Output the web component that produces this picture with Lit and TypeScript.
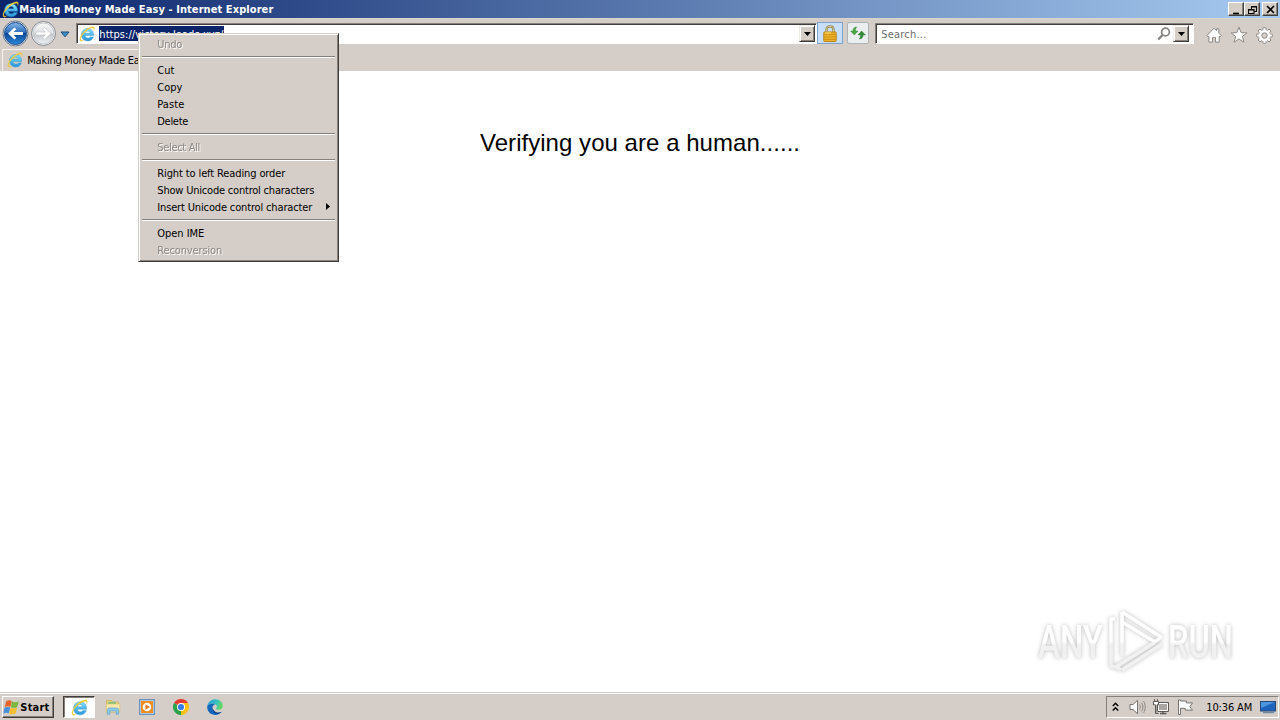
import { LitElement, html, svg, css, nothing } from "lit";
import { customElement } from "lit/decorators.js";

/* A single line of interface text, spaced out to a given width. */
const label = (text: string, w: number, cls = "", y = 11) => html`
  <svg class="label ${cls}" width=${w + 1} height="16" viewBox="0 0 ${w + 1} 16">
    <text x="0.3" y=${y} textLength=${w}>${text}</text>
  </svg>`;

const ie = (s: number, id: string) => html`
  <svg class="icon" width=${s} height=${s} viewBox="0 0 16 16">
    <defs><linearGradient id=${id} x1="0" y1="0" x2="0" y2="1"><stop offset="0" stop-color="#8bdcfa"/><stop offset=".5" stop-color="#4dbcf0"/><stop offset="1" stop-color="#2a93da"/></linearGradient></defs>
    <path d="M14.600 9.600H6c.1 1.500 1.200 2.500 2.800 2.500 1.100 0 1.900-.4 2.400-1.200h3.200c-.8 2.500-2.900 4-5.700 4-3.700 0-6.200-2.400-6.200-6.100S5 2.500 8.600 2.500s6.300 2.700 6 7.100zM6.100 7.300h5c-.1-1.300-1.100-2.200-2.500-2.200S6.300 6 6.100 7.300z" fill="url(#${id})" stroke="#2f8fcb" stroke-width=".4"/>
    <path d="M2 15.300C-.3 14.300 1 9.800 4.500 6 8.200 2 13.200-.2 14.900 1.200c.8.7.6 2-.1 3.300.1-1.200 0-1.900-.5-2.200C12.700 1.300 8.600 3.500 5.300 6.900c-3.100 3.300-4.300 6.300-3.200 7.200.6.400 1.600.2 2.700-.4-1.200 1.100-2 1.900-2.800 1.600z" fill="#f6d236" stroke="#d9b02a" stroke-width=".2"/>
  </svg>`;

const icons = {
  back: html`<svg class="icon" width="27" height="27" viewBox="0 0 27 27">
    <defs><linearGradient id="bk" x1="0" y1="0" x2="0" y2="1"><stop offset="0" stop-color="#85b5e6"/><stop offset=".45" stop-color="#2d6fbd"/><stop offset=".5" stop-color="#0f4596"/><stop offset="1" stop-color="#2c8bdd"/></linearGradient></defs>
    <circle cx="13.500" cy="13.500" r="12.500" fill="#dce6ef" stroke="#6c7987"/><circle cx="13.500" cy="13.500" r="11" fill="url(#bk)" stroke="#1c4d91"/>
    <path d="M6 13.500l6.500-6 1.800 1.800-2.700 2.700h9.400v3h-9.400l2.700 2.700-1.800 1.800z" fill="#fff"/></svg>`,
  forward: html`<svg class="icon" width="27" height="27" viewBox="0 0 27 27">
    <defs><linearGradient id="fw" x1="0" y1="0" x2="0" y2="1"><stop offset="0" stop-color="#fafafa"/><stop offset=".48" stop-color="#dfe0e2"/><stop offset=".52" stop-color="#c4c8cd"/><stop offset="1" stop-color="#eef1f4"/></linearGradient></defs>
    <circle cx="13.500" cy="13.500" r="12" fill="#f2f3f4" stroke="#858b92"/><circle cx="13.500" cy="13.500" r="10.500" fill="url(#fw)" stroke="#c4c8cc"/>
    <path d="M21 13.500l-6.500-6-1.800 1.800 2.700 2.700H6v3h9.400l-2.700 2.700 1.800 1.800z" fill="#fff" stroke="#b4b8bc" stroke-width=".5"/></svg>`,
  recent: html`<svg class="icon" width="10" height="7" viewBox="0 0 10 7"><path d="M1 1h8L5 5.800z" fill="#3c8fc9" stroke="#1b4b78"/></svg>`,
  down: html`<svg class="icon" width="7" height="4" viewBox="0 0 7 4"><path d="M0 0h7L3.500 4z" fill="#000"/></svg>`,
  lock: html`<svg class="icon" width="14" height="17" viewBox="0 0 14 17">
    <path d="M3.500 8V4.500C3.500 2.300 5 1.300 7 1.300s3.500 1 3.500 3.200V8" fill="none" stroke="#8d7a45" stroke-width="2.200"/><path d="M3.500 8V4.500C3.500 2.300 5 1.300 7 1.300s3.500 1 3.500 3.200V8" fill="none" stroke="#e5d9a4" stroke-width=".9"/>
    <rect x=".8" y="7" width="12.400" height="9.500" rx=".8" fill="#efb128" stroke="#b88216"/><path d="M1.500 9.500h11M1.500 12h11M1.500 14.500h11" stroke="#c78a12" stroke-width=".8"/><path d="M2 8h6" stroke="#ffe170"/></svg>`,
  refresh: html`<svg class="icon" width="16" height="14" viewBox="0 0 16 14">
    <path d="M6.800 1C4.300 1 3 2.300 3 5H.6l3.800 4L8 5H5.400C5.400 3 5.800 2 6.800 1z" fill="#48a83f" stroke="#267a2e" stroke-width=".4"/>
    <path d="M9.200 13c2.500 0 3.800-1.300 3.800-4h2.400l-3.800-4L8 9h2.600c0 2-.4 3-1.400 4z" fill="#328c35" stroke="#1e6827" stroke-width=".4"/></svg>`,
  search: html`<svg class="icon" width="14" height="14" viewBox="0 0 14 14"><circle cx="8.500" cy="5" r="3.900" fill="#fff" stroke="#85817e" stroke-width="1.700"/><path d="M5.500 8L1.300 12.500" stroke="#85817e" stroke-width="2.400"/></svg>`,
  home: html`<svg class="icon" width="16" height="16" viewBox="0 0 16 16"><path d="M.8 8.700L8 1.200l2.500 2.500V1.800h2.300v4.300l2.500 2.600-1.300 1.200-.8-.8v6h-3.700v-4.700h-3v4.700H2.900v-6l-.8.800z" fill="#fff" stroke="#8d8985" stroke-width="1"/></svg>`,
  star: html`<svg class="icon" width="18" height="18" viewBox="0 0 18 18"><path d="M9 1.200l2.100 5.400 5.800.3-4.500 3.600 1.500 5.700L9 13l-4.900 3.200 1.500-5.700L1.100 6.900l5.800-.3z" fill="#fff" stroke="#8d8985"/></svg>`,
  gear: html`<svg class="icon" width="17" height="17" viewBox="-8.500 -8.500 17 17">
    <g fill="#fff" stroke="#8d8985" stroke-width=".9">${[0, 45, 90, 135, 180, 225, 270, 315].map(a => svg`<path transform="rotate(${a})" d="M-1.700-5L-1.400-7.800H1.400L1.700-5"/>`)}</g>
    <circle r="4.300" fill="none" stroke="#fff" stroke-width="2.600"/><circle r="2.700" fill="#d4cec8" stroke="#8d8985" stroke-width=".9"/></svg>`,
  flag: html`<svg class="icon" width="17" height="17" viewBox="0 0 16 16">
    <path d="M3 2.200C5 .8 6.700 1.200 8.300 2L6.900 7.500C5 6.600 3.500 6.600 1.600 7.500z" fill="#e7652b"/><path d="M8.700 2.300c2 1 3.900 1 6.200-.2l-1.500 5.500c-2.100 1.100-4.100 1.100-6.100.2z" fill="#7cb83c"/>
    <path d="M1.500 8.100c1.800-.9 3.500-.9 5.300 0l-1.400 5.400c-1.700-.8-3.400-.8-5.200.2z" fill="#4b8fd8"/><path d="M7.200 8.300c2 .9 4 .9 6.100-.1l-1.500 5.500c-2 1-4 1-6 .1z" fill="#f5bd30"/></svg>`,
  folder: html`<svg class="icon" width="16" height="16" viewBox="0 0 16 16">
    <path d="M1.500 1.500h5l1 1.500h6v10h-12z" fill="#ecd27a" stroke="#c8a849" stroke-width=".6"/><path d="M3 2.800h8v3H3z" fill="#8cc47c"/><path d="M1.200 5h13.600v8H1.200z" fill="#f7e7a8" stroke="#d6bb66" stroke-width=".5"/>
    <path d="M2.300 15.300V11c0-1.300.8-2 2-2h7.400c1.200 0 2 .7 2 2v4.300h-2.500V12H4.800v3.300z" fill="#8ac8ec" stroke="#5a9fce" stroke-width=".6"/></svg>`,
  media: html`<svg class="icon" width="16" height="16" viewBox="0 0 16 16"><rect x=".6" y=".6" width="14.800" height="14.800" fill="#b5d2ec" stroke="#5d8bb6"/><rect x="2" y="2" width="12" height="12" fill="#f28c1e"/><circle cx="8" cy="8" r="4.300" fill="#fff"/><path d="M6.500 5.200L10.800 8l-4.300 2.800z" fill="#e87817"/></svg>`,
  chrome: html`<svg class="icon" width="16" height="16" viewBox="0 0 16 16"><path d="M8 8L1.070 4A8 8 0 0 1 14.930 4z" fill="#e33b2e"/><path d="M8 8l6.930-4A8 8 0 0 1 8 16z" fill="#fbc116"/><path d="M8 8v8A8 8 0 0 1 1.070 4z" fill="#2da14c"/><path d="M8 4h6.930L11.500 10z" fill="#fbc116"/><path d="M8 16l3.500-6L8 8z" fill="#fbc116"/><circle cx="8" cy="8" r="4" fill="#fff"/><circle cx="8" cy="8" r="3.100" fill="#3b7ded"/></svg>`,
  edge: html`<svg class="icon" width="16" height="16" viewBox="0 0 16 16">
    <defs><linearGradient id="eg" x1="0" y1="0" x2="1" y2=".3"><stop offset="0" stop-color="#269ed9"/><stop offset=".6" stop-color="#35bfc4"/><stop offset="1" stop-color="#64d866"/></linearGradient></defs>
    <path d="M.2 7.700C.5 3.500 4 .2 8.200.2c4.500 0 7.600 3.200 7.600 6.500 0 2.600-2 4.100-4.200 4.100-1.600 0-2.500-.5-2.500-1.100 0-.5.800-.8.800-2.100C9.900 5.700 8 4.600 5.500 4.600 2.800 4.600.8 6 .2 7.700z" fill="url(#eg)"/>
    <path d="M.2 7.700C.8 5.900 2.800 4.600 5.500 4.600c1.300 0 2.300.3 3.100.8C6.500 5.300 5.300 7.200 5.300 9c0 3 2.700 5 5.500 4.900 1.500 0 2.600-.4 3.800-1.100-1.400 1.900-3.700 3.100-6.400 3.100C3.700 15.900-.1 12.300.2 7.700z" fill="#1469bd"/><path d="M5.600 8C4.400 12 7.500 15.500 12 14.800c1-.4 1.900-1.100 2.600-2-4 2-8.800-.3-9-4.800z" fill="#10458f"/></svg>`,
  chevrons: html`<svg class="icon" width="7" height="10" viewBox="0 0 7 10"><path d="M.8 4L3.500 1.300 6.200 4M.8 8.500l2.700-2.700 2.700 2.700" fill="none" stroke="#000" stroke-width="1.500"/></svg>`,
  volume: html`<svg class="icon" width="17" height="16" viewBox="0 0 17 16"><path d="M1 5.500h3L8.500 1.300v13.400L4 10.500H1z" fill="#fff" stroke="#777370"/><path d="M10.500 5.500c1 1.600 1 3.400 0 5M12.500 3.700c2 2.800 2 5.800 0 8.600M14.500 2c2.300 3.800 2.300 8.200 0 12" fill="none" stroke="#8b8783"/></svg>`,
  network: html`<svg class="icon" width="16" height="16" viewBox="0 0 16 16"><path d="M4.500 3.500h11v9h-11z" fill="#aaa7a4" stroke="#5c5957"/><path d="M5.500 4.500h9v7h-9z" fill="none" stroke="#fff"/><path d="M7 14.500h6.500M10 12.500v2" stroke="#5c5957" stroke-width="1.500"/><path d="M.5 2.500h5v3.300H4v8.700h1.500M.5 2.500v3.300h2v8.700H4M1.500 0v2.500M4.500 0v2.500" fill="#fff" stroke="#5c5957"/></svg>`,
  action: html`<svg class="icon" width="17" height="16" viewBox="0 0 17 16"><path d="M1.500 1v14.500h2V9.300h4.800v1.800h7.200l-2.700-3.500 2.700-3.700H9.300V2H3.500V1z" fill="#fff" stroke="#777370"/></svg>`,
  desktop: html`<svg class="icon" width="16" height="14" viewBox="0 0 16 14"><rect x=".5" y="1.500" width="15" height="9.500" fill="#1e64bd" stroke="#254876"/><path d="M1 2h14L1 8z" fill="#4c96df"/><path d="M3 12.500h11" stroke="#70889f" stroke-width="1.500"/></svg>`,
};

type Item = { t: string; w: number; off?: boolean; sub?: boolean } | null;
const MENU: Item[] = [
  { t: "Undo", w: 25, off: true }, null,
  { t: "Cut", w: 17 }, { t: "Copy", w: 25 }, { t: "Paste", w: 27 }, { t: "Delete", w: 31 }, null,
  { t: "Select All", w: 43, off: true }, null,
  { t: "Right to left Reading order", w: 128 }, { t: "Show Unicode control characters", w: 157 }, { t: "Insert Unicode control character", w: 155, sub: true }, null,
  { t: "Open IME", w: 47 }, { t: "Reconversion", w: 65, off: true },
];

@customElement("app-root")
export class AppRoot extends LitElement {
  static styles = css`
    :host { display: flex; flex-direction: column; width: 1280px; height: 720px; position: relative; overflow: hidden; background: #fff; color: #000; }
    * { box-sizing: border-box; }
    svg { display: block; flex: none; }
    .label { overflow: visible; font: 11px "DejaVu Sans Condensed", "DejaVu Sans", sans-serif; font-stretch: condensed; fill: currentColor; }
    .bold { font-weight: bold; }
    .title { flex: none; height: 18px; display: flex; align-items: center; padding: 0 2px 0 2px; color: #fff; background: linear-gradient(90deg, #0a246a, #a6caf0); }
    .grow { flex: 1; }
    .win { width: 16px; height: 14px; background: #d5cec7; border: 1px solid; border-color: #fff #404040 #404040 #fff; box-shadow: inset -1px -1px #85807b; display: grid; place-items: center; }
    .close { margin-left: 2px; }
    .chrome { flex: none; height: 53px; background: #d5cec8; border-top: 1px solid #d9d6ca; display: flex; flex-direction: column; }
    .nav { height: 30px; padding: 3px 0 0 2px; display: flex; align-items: flex-start; }
    .travel { display: flex; gap: 1px; margin-top: -2px; width: 58px; }
    .recent { padding: 9px 0 0; width: 16px; }
    .field { height: 21px; border: 1px solid; border-color: #85807b #fff #fff #85807b; box-shadow: inset 1px 1px #403d3b; background: #fff; display: flex; align-items: center; padding: 1px; margin-top: 1px; }
    .address { width: 741px; padding-left: 2px; padding-right: 1px; }
    .url { background: #0a246a; color: #fff; width: 125px; height: 15px; margin-left: 4px; }
    .drop { width: 16px; height: 17px; background: #d5cec7; border: 1px solid; border-color: #efece8 #403d3b #403d3b #efece8; box-shadow: inset 1px 1px #fff, inset -1px -1px #85807b; display: grid; place-items: center; }
    .lock { width: 26px; height: 22px; border: 1px solid #7da2ce; background: #c9dff8; display: grid; place-items: center; }
    .reload { width: 22px; height: 22px; margin-left: 4px; border: 1px solid #aeb3b7; border-radius: 2px; background: #ebeeee; display: grid; place-items: center; }
    .search { width: 319px; margin-left: 6px; color: #6d6d6d; padding-left: 5px; padding-right: 4px; }
    .mag { margin-right: 2px; }
    .tools { display: flex; align-items: center; gap: 8px; margin-left: 12px; height: 18px; margin-top: 4px; }
    .tabs { height: 22px; padding-left: 2px; display: flex; }
    .tab { width: 240px; height: 22px; border: 1px solid #f5f2ef; border-bottom: 0; border-right-color: #85807b; display: flex; align-items: center; gap: 4px; padding: 0 0 1px 4px; }
    .page { flex: 1; min-height: 0; display: flex; flex-direction: column; align-items: center; padding-top: 58px; }
    .verify { margin: 0; }
    .wide { font: 24px "Liberation Sans", Arial, sans-serif; overflow: visible; }
    .mark { position: absolute; left: 1030px; top: 602px; overflow: visible; filter: drop-shadow(0 0 2px #bbb); }
    .mark text { font: 47px "Roboto", sans-serif; font-weight: 500; }
    .menu { position: absolute; left: 138px; top: 33px; width: 201px; height: 229px; background: #d5cec8; border: 1px solid; border-color: #d5cec7 #403d3b #403d3b #d5cec7; box-shadow: inset 1px 1px #fff, inset -1px -1px #85807b; padding: 2px; }
    .item { height: 17px; display: flex; align-items: center; padding: 0 6px 0 16px; justify-content: space-between; }
    .arrow { margin-bottom: 2px; }
    .off { color: #8b8681; filter: drop-shadow(1px 1px 0 #fff); }
    .sep { height: 2px; margin: 3px 1px 4px; border-top: 1px solid #85807b; border-bottom: 1px solid #fff; }
    .taskbar { flex: none; height: 28px; background: #d5cec8; border-top: 1px solid #d5cec8; box-shadow: inset 0 1px #fff; padding: 3px 1px 2px 2px; display: flex; align-items: flex-start; }
    .start { width: 52px; height: 22px; border: 1px solid; border-color: #fff #403d3b #403d3b #fff; box-shadow: inset -1px -1px #85807b; display: flex; align-items: center; padding-left: 0; }
    .active { width: 32px; height: 22px; margin-left: 9px; background: #fff; border: 1px solid; border-color: #403d3b #fff #fff #403d3b; box-shadow: inset 1px 1px #85807b; display: grid; place-items: center; }
    .pins { height: 22px; display: flex; align-items: center; gap: 18px; margin-left: 10px; }
    .tray { width: 173px; height: 22px; border: 1px solid; border-color: #85807b #fff #fff #85807b; display: flex; align-items: center; padding-left: 5px; }
    .i1 { margin-left: 10px; }
    .i2 { margin-left: 7px; }
    .i3 { margin-left: 8px; }
    .clock { margin-left: 12px; }
  `;

  render() {
    return html`
      <div class="title">${ie(17, "ie1")}${label("Making Money Made Easy - Internet Explorer", 254, "bold", 12)}<span class="grow"></span>
        ${["M2 9.500h6", "M4.500 5V2.500h5v5H7.500M4.500 3h5M1.500 5.500h5.500v4H1.500zM1.500 6h5.500", "M2 2l7 7M9 2l-7 7"].map((d, i) => html`<div class="win ${i === 2 ? "close" : ""}"><svg width="11" height="11" viewBox="0 0 11 11"><path d=${d} fill="none" stroke="#000" stroke-width=${i === 1 ? 1.1 : 1.7}/></svg></div>`)}
      </div>
      <div class="chrome">
        <div class="nav">
          <div class="travel">${icons.back}${icons.forward}</div><div class="recent">${icons.recent}</div>
          <div class="field address">${ie(16, "ie2")}<div class="url">${label("https://victory-leads.xyz/", 124, "", 12)}</div><span class="grow"></span><div class="drop">${icons.down}</div></div>
          <div class="lock">${icons.lock}</div><div class="reload">${icons.refresh}</div>
          <div class="field search">${label("Search...", 45, "", 12)}<span class="grow"></span><div class="mag">${icons.search}</div><div class="drop">${icons.down}</div></div>
          <div class="tools">${icons.home}${icons.star}${icons.gear}</div>
        </div>
        <div class="tabs"><div class="tab">${ie(16, "ie3")}${label("Making Money Made Easy", 123, "", 12)}</div></div>
      </div>
      <div class="page"><h1 class="verify"><svg class="wide" width="320" height="28" viewBox="0 0 320 28"><text x="0" y="22" textLength="320">Verifying you are a human......</text></svg></h1></div>
      <svg class="mark" width="210" height="80" viewBox="0 0 210 80">
        <defs><linearGradient id="mk" x1="0" y1="0" x2="0" y2="1"><stop offset=".5" stop-color="#fff"/><stop offset=".56" stop-color="#f1f1f1"/></linearGradient></defs>
        <text x="8" y="56" textLength="65" lengthAdjust="spacingAndGlyphs" fill="url(#mk)">ANY</text>
        <text x="138" y="56" textLength="65" lengthAdjust="spacingAndGlyphs" fill="url(#mk)">RUN</text>
        <g fill="none" stroke="url(#mk)" stroke-width="3.500" stroke-linejoin="round"><path d="M92 10v44M92 10l39 25-6 5-33-20M85 17h-4v47l5 1 6-4 32-20M92 68l40-26M91 68l-5-3"/></g>
      </svg>
      <div class="menu">${MENU.map(m => m ? html`<div class="item"><span class=${m.off ? "off" : ""}>${label(m.t, m.w)}</span>${m.sub ? html`<svg class="arrow" width="4" height="7" viewBox="0 0 4 7"><path d="M0 0l4 3.500L0 7z"/></svg>` : nothing}</div>` : html`<div class="sep"></div>`)}</div>
      <div class="taskbar">
        <div class="start">${icons.flag}${label("Start", 29, "bold", 12)}</div>
        <div class="active">${ie(17, "ie4")}</div>
        <div class="pins">${icons.folder}${icons.media}${icons.chrome}${icons.edge}</div>
        <span class="grow"></span>
        <div class="tray">${icons.chevrons}<span class="i1">${icons.volume}</span><span class="i2">${icons.network}</span><span class="i3">${icons.action}</span><span class="clock">${label("10:36 AM", 46, "", 12)}</span><span class="i2">${icons.desktop}</span></div>
      </div>`;
  }
}
